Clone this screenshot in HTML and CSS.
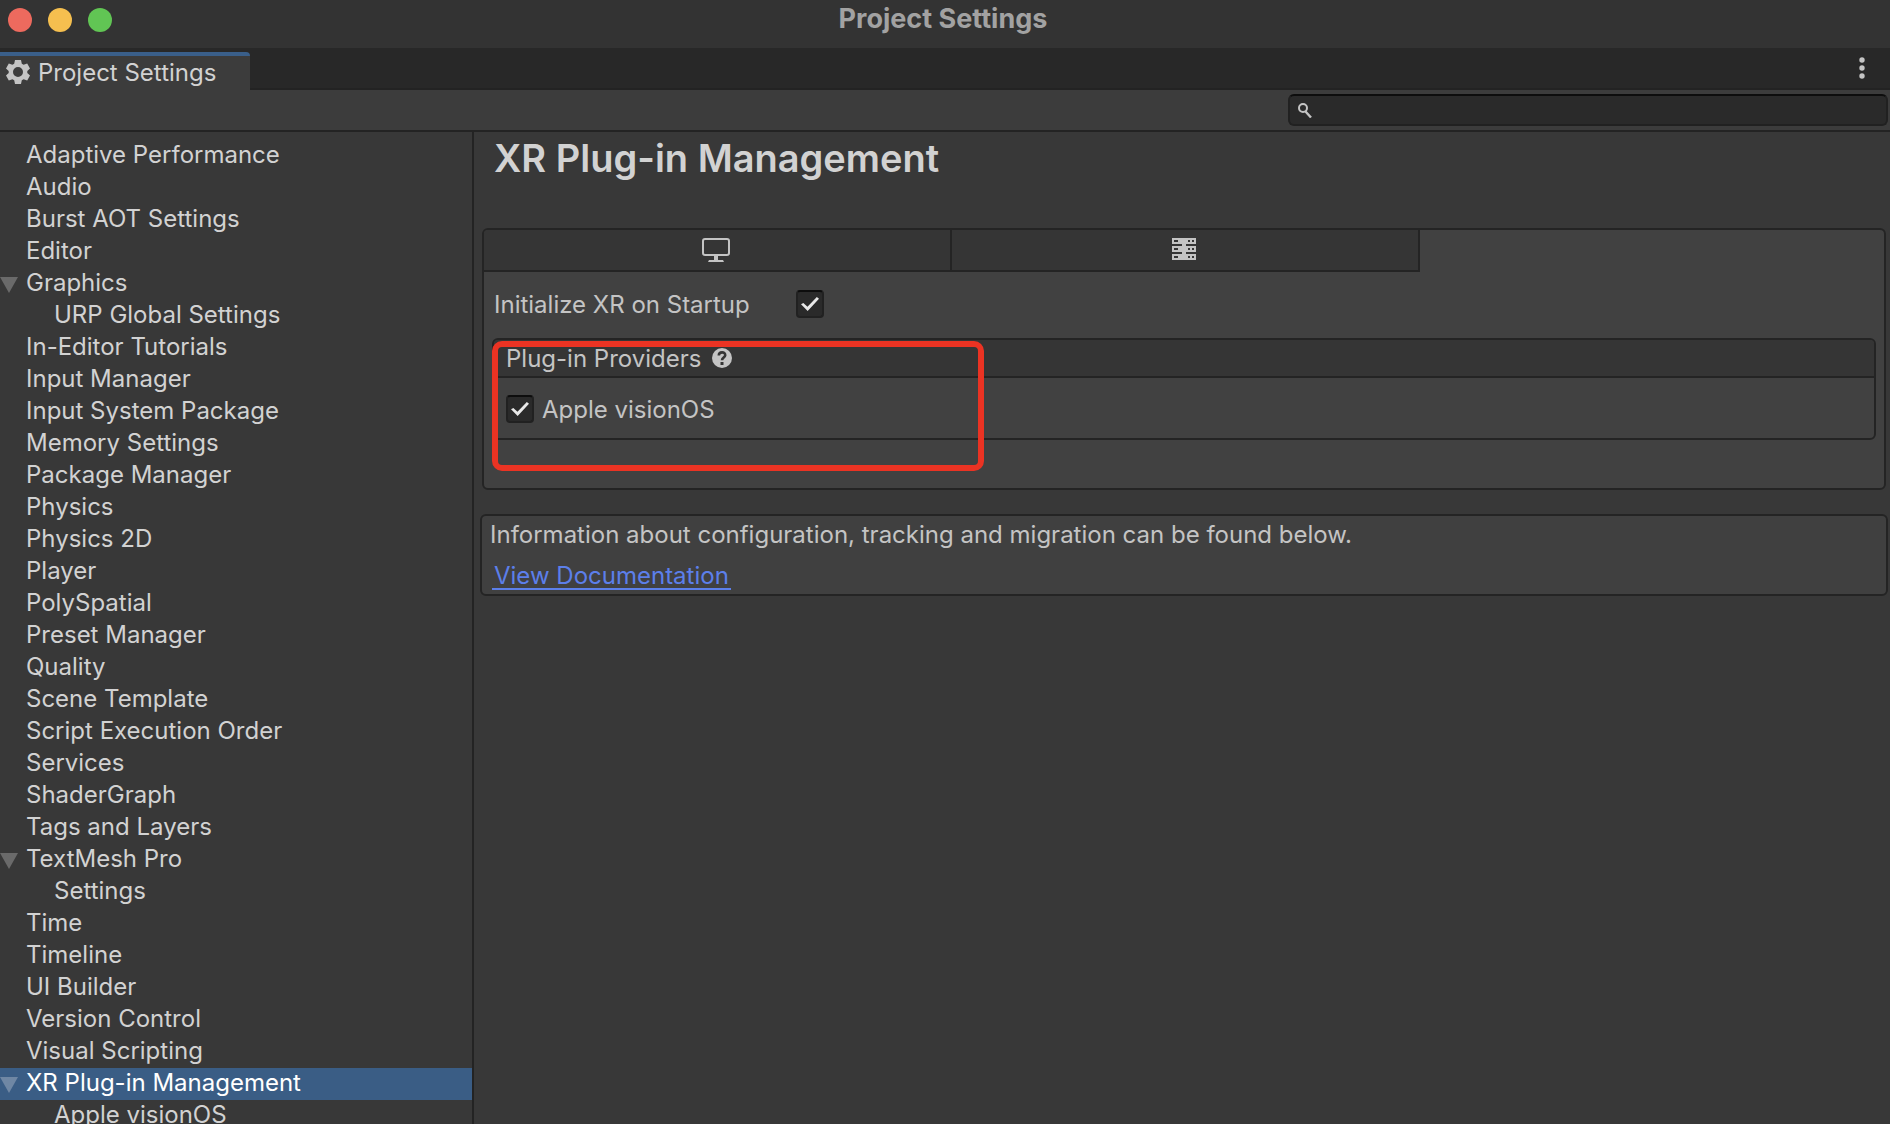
FILE: index.html
```html
<!DOCTYPE html>
<html lang="en">
<head>
<meta charset="utf-8">
<title>Project Settings</title>
<link rel="stylesheet" href="styles.css">
</head>
<body>
<div class="window">
  <header class="titlebar">
    <div class="lights">
      <button class="light light-close" type="button" aria-label="Close"></button>
      <button class="light light-minimize" type="button" aria-label="Minimize"></button>
      <button class="light light-zoom" type="button" aria-label="Zoom"></button>
    </div>
    <div class="window-title">Project Settings</div>
  </header>

  <div class="tabstrip">
    <button class="tab" type="button">
      <svg class="gear" viewBox="0 0 24 24" width="24" height="24" aria-hidden="true">
        <path fill="currentColor" fill-rule="evenodd" d="M9 0h6l.8 3.7 1.8 1L21.200 3.500 24 8.500 21.300 11v2L24 15.500l-2.800 5-3.600-1.200-1.800 1L15 24H9l-.8-3.700-1.800-1L2.800 20.500 0 15.500 2.700 13v-2L0 8.500l2.800-5 3.600 1.200 1.800-1zM12 7a5 5 0 1 0 0 10 5 5 0 0 0 0-10z"/>
      </svg>
      <span>Project Settings</span>
    </button>
    <button class="kebab" type="button" aria-label="Window menu">
      <svg viewBox="0 0 6 22" width="6" height="22" aria-hidden="true">
        <g fill="currentColor"><circle cx="3" cy="3" r="2.700"/><circle cx="3" cy="11" r="2.700"/><circle cx="3" cy="19" r="2.700"/></g>
      </svg>
    </button>
  </div>

  <div class="toolbar">
    <label class="search">
      <svg viewBox="0 0 14 16" width="14" height="16" aria-hidden="true">
        <circle cx="5" cy="6" r="4" fill="none" stroke="currentColor" stroke-width="2"/>
        <path d="M7.500 9.500l5.500 6" fill="none" stroke="currentColor" stroke-width="2.400"/>
      </svg>
      <input type="text" aria-label="Search settings">
    </label>
  </div>

  <div class="main">
    <nav class="sidebar" aria-label="Settings categories">
      <a class="item" href="#">Adaptive Performance</a>
      <a class="item" href="#">Audio</a>
      <a class="item" href="#">Burst AOT Settings</a>
      <a class="item" href="#">Editor</a>
      <a class="item open" href="#">Graphics</a>
      <a class="item nested" href="#">URP Global Settings</a>
      <a class="item" href="#">In-Editor Tutorials</a>
      <a class="item" href="#">Input Manager</a>
      <a class="item" href="#">Input System Package</a>
      <a class="item" href="#">Memory Settings</a>
      <a class="item" href="#">Package Manager</a>
      <a class="item" href="#">Physics</a>
      <a class="item" href="#">Physics 2D</a>
      <a class="item" href="#">Player</a>
      <a class="item" href="#">PolySpatial</a>
      <a class="item" href="#">Preset Manager</a>
      <a class="item" href="#">Quality</a>
      <a class="item" href="#">Scene Template</a>
      <a class="item" href="#">Script Execution Order</a>
      <a class="item" href="#">Services</a>
      <a class="item" href="#">ShaderGraph</a>
      <a class="item" href="#">Tags and Layers</a>
      <a class="item open" href="#">TextMesh Pro</a>
      <a class="item nested" href="#">Settings</a>
      <a class="item" href="#">Time</a>
      <a class="item" href="#">Timeline</a>
      <a class="item" href="#">UI Builder</a>
      <a class="item" href="#">Version Control</a>
      <a class="item" href="#">Visual Scripting</a>
      <a class="item open selected" href="#" aria-current="page">XR Plug-in Management</a>
      <a class="item nested" href="#">Apple visionOS</a>
    </nav>

    <main class="content">
      <h1>XR Plug-in Management</h1>

      <section class="panel">
        <div class="platforms">
          <button class="platform" type="button" aria-label="Desktop">
            <svg viewBox="0 0 28 24" width="28" height="24" aria-hidden="true">
              <rect x="1" y="1" width="26" height="16" rx="2" fill="none" stroke="currentColor" stroke-width="2"/>
              <path fill="currentColor" d="M12 18h4v4h5l1 2H6l1-2h5z"/>
            </svg>
          </button>
          <button class="platform" type="button" aria-label="Dedicated server">
            <svg viewBox="0 0 24 22" width="24" height="22" shape-rendering="crispEdges" aria-hidden="true">
              <path fill="currentColor" fill-rule="evenodd" d="M0 0h24v6H14v2h10v6H14v2h10v6H0v-6h10v-2H0V8h10V6H0zM2 2v2h4V2zM16 2v2h2V2zM20 2v2h2V2zM2 10v2h4v-2zM16 10v2h2v-2zM20 10v2h2v-2zM2 18v2h4v-2zM16 18v2h2v-2zM20 18v2h2v-2z"/>
            </svg>
          </button>
        </div>

        <div class="startup">
          <label for="init-xr">Initialize XR on Startup</label>
          <input class="check" type="checkbox" id="init-xr" checked>
        </div>

        <div class="providers">
          <div class="providers-head">
            <span>Plug-in Providers</span>
            <svg class="help" viewBox="0 0 20 20" width="20" height="20" aria-hidden="true">
              <circle cx="10" cy="10" r="10" fill="currentColor"/>
              <path d="M6.800 7.600C6.800 3.200 13.400 3.400 13.200 7.300 13 9.500 10 9.600 10 12.300" fill="none" stroke="#353535" stroke-width="2.600"/>
              <rect x="8.500" y="14" width="3" height="3" fill="#353535"/>
            </svg>
          </div>
          <div class="provider">
            <input class="check" type="checkbox" id="visionos" checked>
            <label for="visionos">Apple visionOS</label>
          </div>
          <div class="highlight"></div>
        </div>
      </section>

      <section class="info">
        <p>Information about configuration, tracking and migration can be found below.</p>
        <a class="doc-link" href="#">View Documentation</a>
      </section>
    </main>
  </div>
</div>
</body>
</html>
```
FILE: styles.css
```css
* {
  box-sizing: border-box;
}

body {
  margin: 0;
  background: #383838;
  color: #c4c4c4;
  font: 24px/30px Inter, "Liberation Sans", sans-serif;
}

button {
  padding: 0;
  border: 0;
  background: none;
  color: inherit;
  font: inherit;
}

.window {
  display: flex;
  flex-direction: column;
  height: 100vh;
  overflow: hidden;
}

/* Title bar */
.titlebar {
  display: grid;
  grid-template-columns: 1fr auto 1fr;
  flex: none;
  height: 48px;
  padding: 0 12px 0 8px;
  background: #333;
}

.lights {
  display: flex;
  gap: 16px;
  padding-top: 8px;
}

.light {
  width: 24px;
  height: 24px;
  border-radius: 50%;
}

.light-close { background: #ed6a5e; }
.light-minimize { background: #f5bf4f; }
.light-zoom { background: #61c554; }

.window-title {
  padding-top: 4px;
  color: #a2a2a2;
  font-size: 27px;
  font-weight: 700;
}

/* Tab strip */
.tabstrip {
  display: flex;
  justify-content: space-between;
  flex: none;
  height: 42px;
  padding-top: 4px;
  background: #282828;
  box-shadow: inset 0 -2px #232323;
}

.tab {
  display: flex;
  gap: 8px;
  width: 250px;
  padding: 0 6px;
  border-top: 4px solid #3a5f8a;
  border-top-right-radius: 4px;
  background: #3c3c3c;
  color: #d2d2d2;
}

.gear {
  margin-top: 4px;
  color: #c4c4c4;
}

.tab span {
  padding-top: 2px;
}

.kebab {
  align-self: flex-start;
  height: 32px;
  padding: 0 25px;
  color: #c4c4c4;
}

.kebab svg {
  display: block;
}

/* Toolbar */
.toolbar {
  display: flex;
  justify-content: flex-end;
  flex: none;
  height: 42px;
  padding: 4px 2px;
  border-bottom: 2px solid #232323;
  background: #3c3c3c;
}

.search {
  display: flex;
  align-items: center;
  gap: 8px;
  width: 600px;
  height: 32px;
  padding: 0 8px;
  border: 2px solid #212121;
  border-top-color: #0d0d0d;
  border-radius: 6px;
  background: #2a2a2a;
}

.search input {
  flex: 1;
  min-width: 0;
  padding: 0;
  border: 0;
  outline: 0;
  background: none;
  color: #d2d2d2;
  font: inherit;
}

/* Sidebar */
.main {
  display: flex;
  flex: 1;
  min-height: 0;
}

.sidebar {
  flex: none;
  width: 474px;
  padding-top: 8px;
  border-right: 2px solid #232323;
  overflow: hidden;
}

.item {
  display: block;
  position: relative;
  padding: 0 0 2px 26px;
  color: #d2d2d2;
  text-decoration: none;
}

.nested {
  padding-left: 54px;
}

.open::before {
  content: "";
  position: absolute;
  top: 9px;
  left: 0;
  width: 18px;
  height: 16px;
  background: #6a6a6a;
  clip-path: polygon(0 0, 100% 0, 50% 100%);
}

.selected {
  background: #3a5d85;
  color: #fff;
}

.selected::before {
  background: #6f87a4;
}

/* Content */
.content {
  flex: 1;
  min-width: 0;
  padding: 4px 2px 0 6px;
}

h1 {
  margin: 0 14px 48px;
  color: #d2d2d2;
  font-size: 38px;
  line-height: 44px;
  font-weight: 600;
}

.panel {
  margin: 0 2px 24px;
  padding-bottom: 48px;
  border: 2px solid #242424;
  border-radius: 6px;
  background: #414141;
}

.platforms {
  display: flex;
}

.platform {
  display: flex;
  align-items: flex-start;
  justify-content: center;
  width: calc((100% + 4px) / 3);
  height: 42px;
  padding: 8px 2px 0 0;
  border: solid #242424;
  border-width: 0 2px 2px 0;
  background: #353535;
}

.platform:first-child {
  border-top-left-radius: 4px;
}

.startup {
  display: flex;
  align-items: flex-start;
  padding: 18px 10px 18px;
}

.startup label {
  width: 302px;
}

.check {
  appearance: none;
  display: grid;
  place-items: center;
  width: 28px;
  height: 28px;
  margin: 0;
  border: 2px solid #212121;
  border-top-color: #0d0d0d;
  border-radius: 4px;
  background: #2a2a2a;
}

.check:checked::before {
  content: "";
  width: 18px;
  height: 14px;
  background: #e8e8e8;
  clip-path: polygon(0 52%, 13% 42%, 36% 70%, 88% 0, 100% 12%, 37% 100%);
}

.providers {
  position: relative;
  margin: 0 8px;
  border: 2px solid #242424;
  border-radius: 6px;
}

.providers-head {
  display: flex;
  gap: 11px;
  height: 38px;
  padding: 4px 12px;
  border-bottom: 2px solid #242424;
  border-radius: 4px 4px 0 0;
  background: #353535;
}

.help {
  margin-top: 4px;
}

.provider {
  display: flex;
  align-items: flex-start;
  gap: 8px;
  height: 60px;
  padding: 17px 12px 0;
}

/* Callout frame drawn over the provider list */
.highlight {
  position: absolute;
  top: 1px;
  left: -2px;
  width: 492px;
  height: 130px;
  border: 6px solid #eb3323;
  border-radius: 10px;
  pointer-events: none;
}

.info {
  padding: 4px 8px;
  border: 2px solid #242424;
  border-radius: 6px;
  background: #404040;
}

.info p {
  margin: 0 0 11px;
}

.doc-link {
  display: block;
  width: fit-content;
  height: 29px;
  margin-left: 2px;
  padding: 0 2px;
  border-bottom: 2px solid #5c7fea;
  color: #5c7fea;
  text-decoration: none;
}
```
